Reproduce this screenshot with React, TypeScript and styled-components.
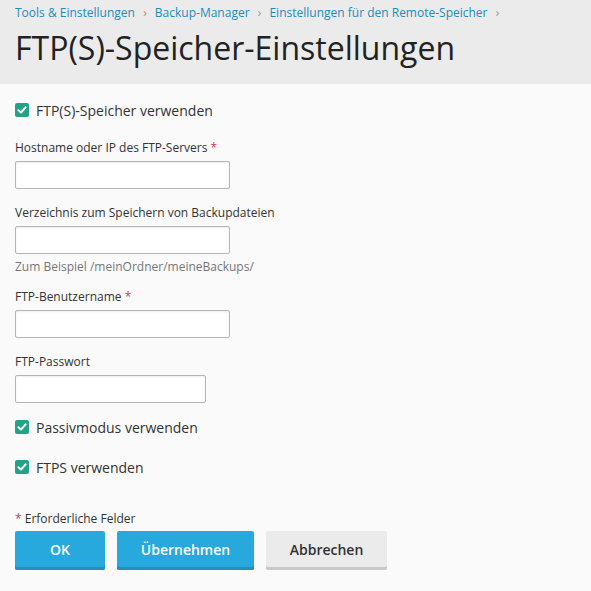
import React from "react";
import styled, { createGlobalStyle } from "styled-components";

const GlobalStyle = createGlobalStyle`
  body {
    margin: 0;
    background: #fafafa;
    font-family: "Open Sans", "Noto Sans", sans-serif;
    color: #333;
  }
`;

function Field({
  label,
  required,
  width,
  hint,
}: {
  label: string;
  required?: boolean;
  width: number;
  hint?: string;
}) {
  return (
    <FieldWrap>
      <Label>
        {label}
        {required && <Star> *</Star>}
      </Label>
      <Input $width={width} />
      {hint && <Hint>{hint}</Hint>}
    </FieldWrap>
  );
}

function Check({ label }: { label: string }) {
  return (
    <CheckRow>
      <CheckBox>
        <svg width="10" height="10" viewBox="0 0 10 10">
          <path d="M1.5 5.2 L4 7.6 L8.6 2.4" fill="none" stroke="#fff" strokeWidth="2" strokeLinecap="round" strokeLinejoin="round" />
        </svg>
      </CheckBox>
      <CheckLabel>{label}</CheckLabel>
    </CheckRow>
  );
}

export default function App() {
  return (
    <>
      <GlobalStyle />
      <Header>
        <Breadcrumbs>
          <Crumb>Tools &amp; Einstellungen</Crumb>
          <Sep>›</Sep>
          <Crumb>Backup-Manager</Crumb>
          <Sep>›</Sep>
          <Crumb>Einstellungen für den Remote-Speicher</Crumb>
          <Sep>›</Sep>
        </Breadcrumbs>
        <Title>FTP(S)-Speicher-Einstellungen</Title>
      </Header>
      <Form>
        <Check label="FTP(S)-Speicher verwenden" />
        <Field label="Hostname oder IP des FTP-Servers" required width={215} />
        <Field
          label="Verzeichnis zum Speichern von Backupdateien"
          width={215}
          hint="Zum Beispiel /meinOrdner/meineBackups/"
        />
        <Field label="FTP-Benutzername" required width={215} />
        <Field label="FTP-Passwort" width={191} />
        <Check label="Passivmodus verwenden" />
        <Check label="FTPS verwenden" />
        <Required>
          <Star>*</Star> Erforderliche Felder
        </Required>
        <Buttons>
          <Button $primary $width={90}>OK</Button>
          <Button $primary $width={137}>Übernehmen</Button>
          <Button $width={121}>Abbrechen</Button>
        </Buttons>
      </Form>
    </>
  );
}

const Header = styled.div`
  background: #ebebeb;
  height: 84px;
  box-sizing: border-box;
  padding: 4px 15px 0;
`;

const Breadcrumbs = styled.div`
  display: flex;
  align-items: center;
  font-size: 12px;
  line-height: 17px;
`;

const Crumb = styled.span`
  color: #1b8bc0;
`;

const Sep = styled.span`
  color: #999;
  margin: 0 8px;
  font-size: 13px;
`;

const Title = styled.h1`
  margin: 6px 0 0;
  font-size: 32px;
  font-weight: 400;
  line-height: 42px;
  color: #222;
`;

const Form = styled.div`
  padding: 16px 15px 0;
  display: flex;
  flex-direction: column;
`;

const FieldWrap = styled.div`
  display: flex;
  flex-direction: column;
  margin-bottom: 16px;
`;

const CheckRow = styled.label`
  display: flex;
  align-items: center;
  gap: 7px;
  height: 20px;
  margin-bottom: 20px;

  ${FieldWrap} + & {
    margin-top: -2px;
  }
`;

const CheckBox = styled.span`
  width: 14px;
  height: 14px;
  border-radius: 2px;
  background: #23a287;
  display: flex;
  align-items: center;
  justify-content: center;
`;

const CheckLabel = styled.span`
  font-size: 14px;
  color: #333;
`;

const Label = styled.div`
  font-size: 12px;
  line-height: 16px;
  color: #333;
  margin-bottom: 5px;
`;

const Star = styled.span`
  color: #d6344e;
`;

const Input = styled.input<{ $width: number }>`
  width: ${(p) => p.$width}px;
  height: 28px;
  box-sizing: border-box;
  border: 1px solid #b5b5b5;
  border-radius: 2px;
  background: #fff;
  box-shadow: inset 0 1px 2px rgba(0, 0, 0, 0.08);
`;

const Hint = styled.div`
  font-size: 12px;
  line-height: 16px;
  color: #777;
  margin-top: 5px;
  margin-bottom: -2px;
`;

const Required = styled.div`
  font-size: 12px;
  color: #333;
  margin-top: 14px;
  line-height: 16px;
`;

const Buttons = styled.div`
  display: flex;
  gap: 12px;
  margin-top: 4px;
`;

const Button = styled.button<{ $primary?: boolean; $width: number }>`
  width: ${(p) => p.$width}px;
  height: 39px;
  border: none;
  border-radius: 2px;
  font-family: "Open Sans", sans-serif;
  font-size: 14px;
  font-weight: 600;
  background: ${(p) => (p.$primary ? "#28a9de" : "#ebebeb")};
  color: ${(p) => (p.$primary ? "#fff" : "#333")};
  box-shadow: inset 0 -3px 0 ${(p) => (p.$primary ? "#2290be" : "#c8c8c8")};
  padding: 0 0 2px;
`;
